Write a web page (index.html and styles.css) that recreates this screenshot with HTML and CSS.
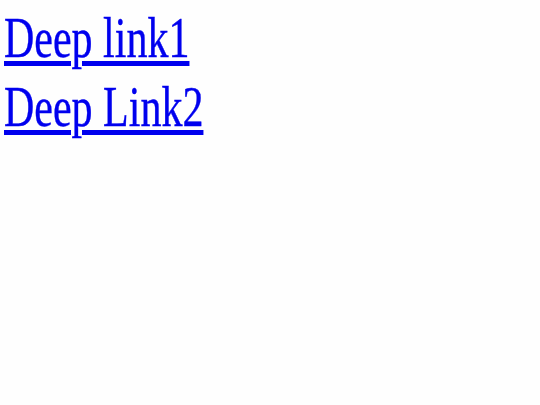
FILE: index.html
```html
<!DOCTYPE html>
<html>
<head>
<meta charset="utf-8">
<link rel="stylesheet" href="styles.css">
</head>
<body>
<nav class="links">
<a class="deep-link" href="#link1">Deep link1</a>
<a class="deep-link" href="#link2">Deep Link2</a>
</nav>
</body>
</html>
```
FILE: styles.css
```css
html, body {
  margin: 0;
  background: #fefefe;
}
.links {
  display: flex;
  flex-direction: column;
  align-items: flex-start;
  padding: 4px 0 0 4px;
}
.deep-link {
  font-family: "Liberation Serif", "Times New Roman", serif;
  font-size: 56px;
  line-height: 69px;
  color: #0000ee;
  text-decoration: underline;
  text-decoration-thickness: 5px;
  text-underline-offset: 4px;
  transform: scaleX(0.75);
  transform-origin: left center;
  -webkit-text-stroke: 0.4px #0000ee;
}
```
